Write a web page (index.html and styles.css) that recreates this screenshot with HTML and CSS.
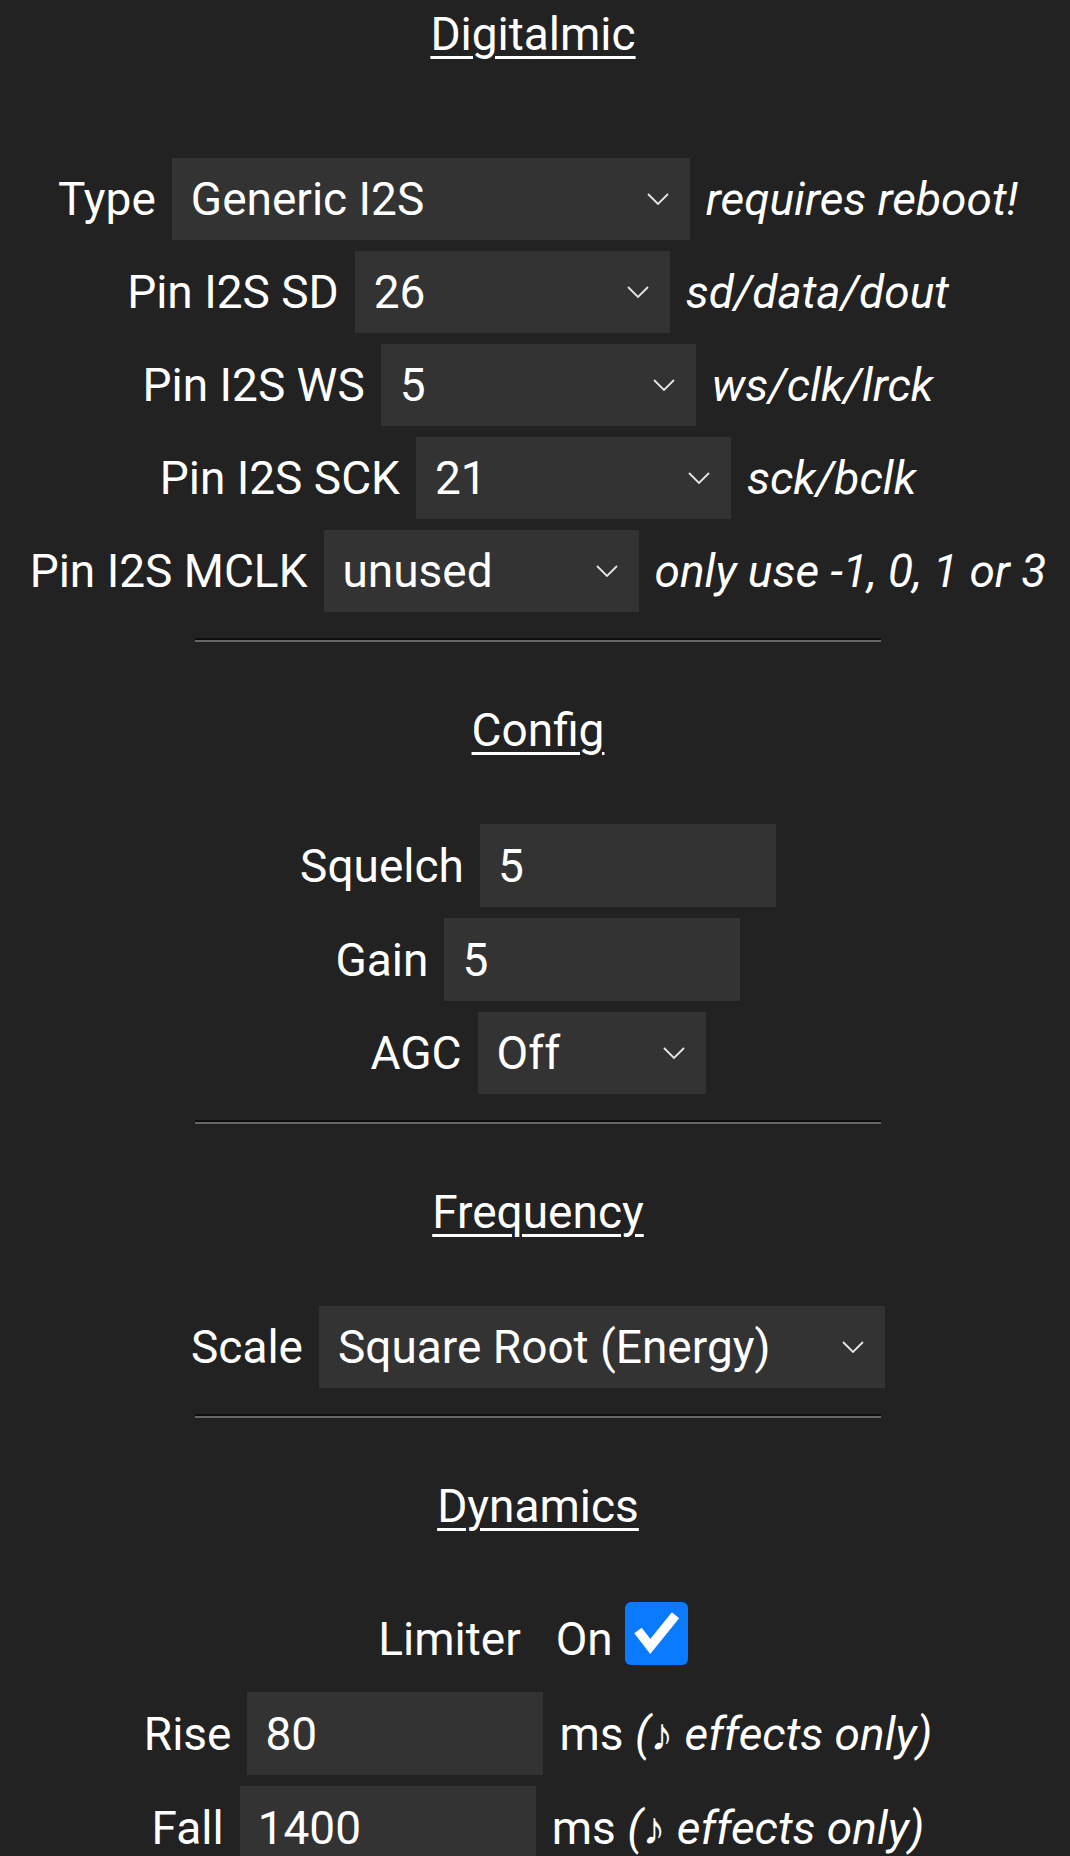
FILE: index.html
```html
<!DOCTYPE html>
<html lang="en">
<head>
  <meta charset="UTF-8" />
  <meta name="viewport" content="width=device-width, initial-scale=1" />
  <title>Usermod Settings</title>
  <link rel="stylesheet" href="styles.css">
</head>
<body>
  <section class="group first">
    <h3 class="heading">Digitalmic</h3>
    <div class="fields">
      <div class="row">
        <label for="dmType">Type</label>
        <div class="sel w-type">
          <select id="dmType">
            <option>Generic I2S</option>
            <option>Generic I2S with Mclk</option>
            <option>Generic I2S PDM</option>
            <option>ES7243</option>
            <option>SPH0654</option>
          </select>
          <svg class="chev" width="22" height="12" viewBox="0 0 22 12"><path d="M1 1 L11 11 L21 1" /></svg>
        </div>
        <span class="note">requires reboot!</span>
      </div>
      <div class="row">
        <label for="pinSd">Pin I2S SD</label>
        <div class="sel w-pin">
          <select id="pinSd"><option>26</option></select>
          <svg class="chev" width="22" height="12" viewBox="0 0 22 12"><path d="M1 1 L11 11 L21 1" /></svg>
        </div>
        <span class="note">sd/data/dout</span>
      </div>
      <div class="row">
        <label for="pinWs">Pin I2S WS</label>
        <div class="sel w-pin">
          <select id="pinWs"><option>5</option></select>
          <svg class="chev" width="22" height="12" viewBox="0 0 22 12"><path d="M1 1 L11 11 L21 1" /></svg>
        </div>
        <span class="note">ws/clk/lrck</span>
      </div>
      <div class="row">
        <label for="pinSck">Pin I2S SCK</label>
        <div class="sel w-pin">
          <select id="pinSck"><option>21</option></select>
          <svg class="chev" width="22" height="12" viewBox="0 0 22 12"><path d="M1 1 L11 11 L21 1" /></svg>
        </div>
        <span class="note">sck/bclk</span>
      </div>
      <div class="row">
        <label for="pinMclk">Pin I2S MCLK</label>
        <div class="sel w-pin">
          <select id="pinMclk"><option>unused</option></select>
          <svg class="chev" width="22" height="12" viewBox="0 0 22 12"><path d="M1 1 L11 11 L21 1" /></svg>
        </div>
        <span class="note">only use -1, 0, 1 or 3</span>
      </div>
    </div>
  </section>

  <hr>

  <section class="group">
    <h3 class="heading">Config</h3>
    <div class="fields">
      <div class="row">
        <label for="squelch">Squelch</label>
        <input class="num" type="number" id="squelch" value="5">
      </div>
      <div class="row">
        <label for="gain">Gain</label>
        <input class="num" type="number" id="gain" value="5">
      </div>
      <div class="row">
        <label for="agc">AGC</label>
        <div class="sel w-agc">
          <select id="agc">
            <option>Off</option>
            <option>Normal</option>
            <option>Vivid</option>
            <option>Lazy</option>
          </select>
          <svg class="chev" width="22" height="12" viewBox="0 0 22 12"><path d="M1 1 L11 11 L21 1" /></svg>
        </div>
      </div>
    </div>
  </section>

  <hr>

  <section class="group">
    <h3 class="heading">Frequency</h3>
    <div class="fields">
      <div class="row">
        <label for="scale">Scale</label>
        <div class="sel w-scale">
          <select id="scale">
            <option>Square Root (Energy)</option>
            <option>None</option>
            <option>Linear (Amplitude)</option>
            <option>Logarithmic</option>
          </select>
          <svg class="chev" width="22" height="12" viewBox="0 0 22 12"><path d="M1 1 L11 11 L21 1" /></svg>
        </div>
      </div>
    </div>
  </section>

  <hr>

  <section class="group">
    <h3 class="heading">Dynamics</h3>
    <div class="fields">
      <div class="row check-row">
        <span class="txt">Limiter</span>
        <label class="txt on" for="limiter">On</label>
        <span class="check" id="limiter" role="checkbox" aria-checked="true">
          <svg width="63" height="63" viewBox="0 0 63 63">
            <rect width="63" height="63" rx="6" fill="#0a7bff" />
            <polyline points="13,28.5 25.3,44.5 50.5,13.3" fill="none" stroke="#fff" stroke-width="9.4" stroke-linejoin="miter" />
          </svg>
        </span>
      </div>
      <div class="row">
        <label for="rise">Rise</label>
        <input class="num" type="number" id="rise" value="80">
        <span class="unit">ms <i>(&#9834; effects only)</i></span>
      </div>
      <div class="row">
        <label for="fall">Fall</label>
        <input class="num" type="number" id="fall" value="1400">
        <span class="unit">ms <i>(&#9834; effects only)</i></span>
      </div>
    </div>
  </section>
</body>
</html>
```

FILE: styles.css
```css
body {
  margin: 0;
  padding: 8px 0 0 6px;
  background-color: #222;
  color: #fff;
  font-family: Roboto, "Noto Sans", sans-serif;
  font-size: 46px;
  line-height: 52px;
  text-align: center;
}
.heading {
  margin: 0;
  font-size: 46px;
  font-weight: 400;
  line-height: 52px;
  text-decoration: underline;
  text-decoration-thickness: 3px;
  text-underline-offset: 6px;
}
.group.first .heading {
  padding-right: 10px;
}
hr + .group {
  margin-top: 62px;
}
.fields {
  display: flex;
  flex-direction: column;
  gap: 11px;
  margin-top: 68px;
}
.group.first .fields {
  margin-top: 98px;
}
.row {
  display: flex;
  justify-content: center;
  align-items: center;
  gap: 16px;
}
.row label, .txt {
  white-space: nowrap;
}
.note {
  font-style: italic;
  white-space: nowrap;
}
.unit {
  white-space: nowrap;
}
hr {
  width: 686px;
  height: 0;
  margin: 26px auto 0;
  border: none;
  border-top: 2px solid #0e0e0e;
  border-bottom: 2px solid #666;
}

/* selects */
.sel {
  position: relative;
  height: 82px;
}
.sel select {
  appearance: none;
  -webkit-appearance: none;
  width: 100%;
  height: 82px;
  margin: 0;
  padding: 0 50px 0 19px;
  border: none;
  border-radius: 0;
  background-color: #333;
  color: #fff;
  font-family: inherit;
  font-size: 46px;
  outline: none;
}
.chev {
  position: absolute;
  right: 21px;
  top: 35px;
  pointer-events: none;
}
.chev path {
  fill: none;
  stroke: #e6e6e6;
  stroke-width: 1.8;
}
.w-type { width: 518px; }
.w-pin { width: 315px; }
.w-agc { width: 228px; }
.w-scale { width: 566px; }

/* number inputs */
.num {
  box-sizing: border-box;
  width: 296px;
  height: 83px;
  margin: 0;
  padding: 0 18px;
  border: none;
  border-radius: 0;
  background-color: #333;
  color: #fff;
  font-family: inherit;
  font-size: 46px;
  outline: none;
  -moz-appearance: textfield;
}
.num::-webkit-outer-spin-button,
.num::-webkit-inner-spin-button {
  -webkit-appearance: none;
  margin: 0;
}

/* limiter checkbox */
.check-row {
  align-items: flex-end;
  margin-top: 2px;
  margin-bottom: 16px;
  padding-right: 10px;
}
.check-row .on {
  margin-left: 19px;
}
.check-row .check {
  display: block;
  width: 63px;
  height: 63px;
  margin-left: -4px;
}
.check svg {
  display: block;
}
```
